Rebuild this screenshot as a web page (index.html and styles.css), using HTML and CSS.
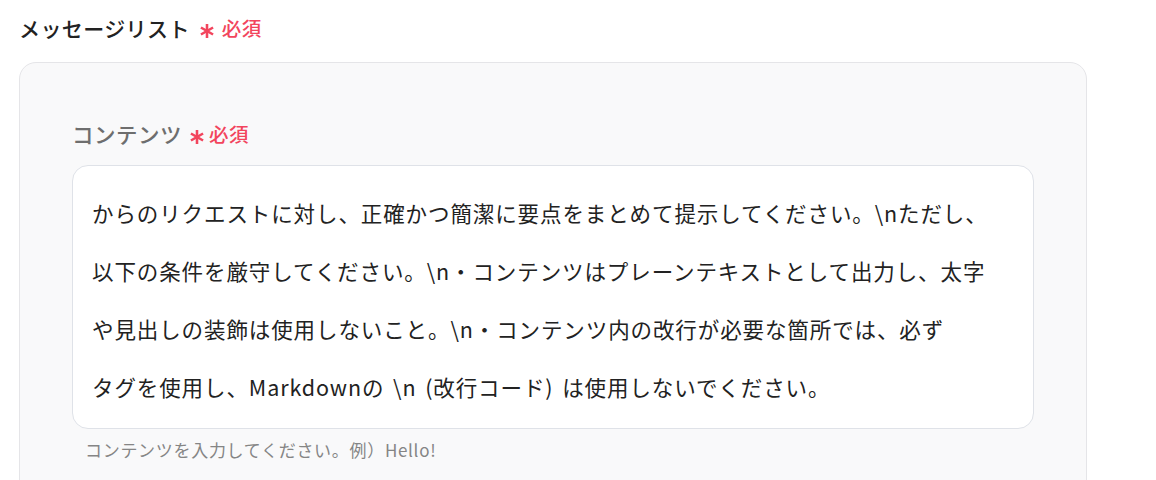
FILE: index.html
```html
<!DOCTYPE html>
<html lang="ja">
<head>
<meta charset="utf-8">
<link rel="stylesheet" href="styles.css">
</head>
<body>
<div class="field">
  <div class="label main-label">
    <span class="label-text">メッセージリスト</span>
    <span class="required">
      <svg class="ast" viewBox="0 0 12 12" width="14" height="14"><g stroke="currentColor" stroke-width="2.2" stroke-linecap="butt"><line x1="6" y1="0" x2="6" y2="12"/><line x1="0.8" y1="3" x2="11.2" y2="9"/><line x1="0.8" y1="9" x2="11.2" y2="3"/></g></svg>
      <span class="req-text">必須</span>
    </span>
  </div>
  <div class="panel">
    <div class="label sub-label">
      <span class="label-text">コンテンツ</span>
      <span class="required">
        <svg class="ast" viewBox="0 0 12 12" width="14" height="14"><g stroke="currentColor" stroke-width="2.2" stroke-linecap="butt"><line x1="6" y1="0" x2="6" y2="12"/><line x1="0.8" y1="3" x2="11.2" y2="9"/><line x1="0.8" y1="9" x2="11.2" y2="3"/></g></svg>
        <span class="req-text">必須</span>
      </span>
    </div>
    <div class="textbox">
      <span class="line">からのリクエストに対し、正確かつ簡潔に要点をまとめて提示してください。\nただし、</span>
      <span class="line">以下の条件を厳守してください。\n・コンテンツはプレーンテキストとして出力し、太字</span>
      <span class="line">や見出しの装飾は使用しないこと。\n・コンテンツ内の改行が必要な箇所では、必ず</span>
      <span class="line">タグを使用し、Markdownの \n (改行コード) は使用しないでください。</span>
    </div>
    <div class="hint">コンテンツを入力してください。例）Hello!</div>
  </div>
</div>
</body>
</html>
```
FILE: styles.css
```css
html, body {
  margin: 0;
  padding: 0;
  background: #ffffff;
  overflow: hidden;
}
body {
  font-family: "Noto Sans CJK JP", "Noto Sans", sans-serif;
  color: #222222;
}
.field {
  padding: 14px 0 0 19px;
  width: 1068px;
}
.label {
  display: flex;
  align-items: center;
  gap: 10px;
}
.label-text {
  font-size: 21px;
  font-weight: 500;
  line-height: 28px;
  letter-spacing: 0.4px;
}
.main-label .label-text {
  color: #222;
}
.required {
  display: flex;
  align-items: center;
  gap: 8px;
  color: #f2455d;
}
.ast {
  display: block;
  margin-top: 6px;
}
.req-text {
  font-size: 19.5px;
  font-weight: 500;
  line-height: 28px;
  letter-spacing: 0.5px;
}
.panel {
  margin-top: 20px;
  background: #f9f9fa;
  border: 1px solid #e5e5e8;
  border-radius: 17px;
  padding: 57px 52px 20px 52px;
  height: 420px;
}
.sub-label {
  margin-bottom: 17px;
  gap: 8px;
}
.sub-label .label-text {
  color: #6e6e6e;
  font-size: 21.5px;
  letter-spacing: 0.5px;
}
.sub-label .required {
  gap: 5px;
}
.sub-label .ast {
  margin-top: 5px;
}
.textbox {
  background: #ffffff;
  border: 1.5px solid #dfe2e8;
  border-radius: 16px;
  width: 962px;
  box-sizing: border-box;
  padding: 17.5px 17px 12.5px 19px;
}
.line {
  display: block;
  white-space: nowrap;
  font-size: 21.5px;
  line-height: 58px;
  letter-spacing: 0.9px;
  word-spacing: 3px;
  color: #222;
}
.hint {
  margin-top: 10px;
  padding-left: 13px;
  font-size: 17px;
  line-height: 22px;
  letter-spacing: 0.7px;
  color: #858585;
}
```
